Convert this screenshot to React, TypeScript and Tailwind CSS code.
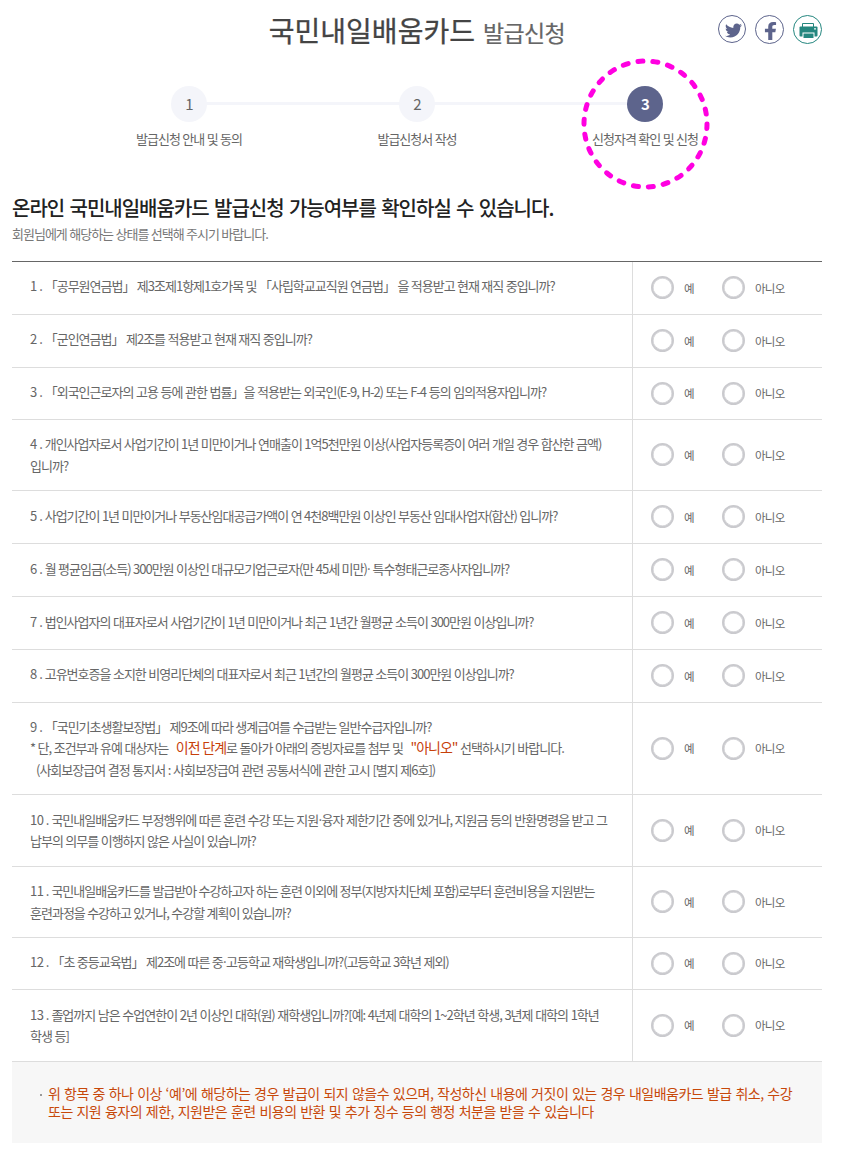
import type { ReactNode } from "react";
import { FaFacebookF, FaTwitter } from "react-icons/fa";

type Question = {
  no: number;
  // row height and word gap
  layout: string;
  lines: ReactNode[];
};

const QUESTIONS: Question[] = [
  {
    no: 1,
    layout: "h-[53px] pb-[5px] [word-spacing:0.5px]",
    lines: [
      "「공무원연금법」 제3조제1항제1호가목 및 「사립학교교직원 연금법」 을 적용받고 현재 재직 중입니까?",
    ],
  },
  {
    no: 2,
    layout: "h-[53px] pb-[5px] [word-spacing:0.6px]",
    lines: ["「군인연금법」 제2조를 적용받고 현재 재직 중입니까?"],
  },
  {
    no: 3,
    layout: "h-[52px] pb-[4px] [word-spacing:0.7px]",
    lines: [
      "「외국인근로자의 고용 등에 관한 법률」을 적용받는 외국인(E-9, H-2) 또는 F-4 등의 임의적용자입니까?",
    ],
  },
  {
    no: 4,
    layout: "h-[71px] pb-[2px] [word-spacing:0.55px]",
    lines: [
      "개인사업자로서 사업기간이 1년 미만이거나 연매출이 1억5천만원 이상(사업자등록증이 여러 개일 경우 합산한 금액)",
      "입니까?",
    ],
  },
  {
    no: 5,
    layout: "h-[53px] pb-[4px] [word-spacing:0.5px]",
    lines: [
      "사업기간이 1년 미만이거나 부동산임대공급가액이 연 4천8백만원 이상인 부동산 임대사업자(합산) 입니까?",
    ],
  },
  {
    no: 6,
    layout: "h-[53px] pb-[4px] [word-spacing:0.5px]",
    lines: [
      <>
        월 평균임금(소득) 300만원 이상인 대규모기업근로자(만 45세 미만)<Dot /> 특수형태근로종사자입니까?
      </>,
    ],
  },
  {
    no: 7,
    layout: "h-[53px] pb-[4px] [word-spacing:0.6px]",
    lines: [
      "법인사업자의 대표자로서 사업기간이 1년 미만이거나 최근 1년간 월평균 소득이 300만원 이상입니까?",
    ],
  },
  {
    no: 8,
    layout: "h-[53px] pb-[5px] [word-spacing:0.6px]",
    lines: [
      "고유번호증을 소지한 비영리단체의 대표자로서 최근 1년간의 월평균 소득이 300만원 이상입니까?",
    ],
  },
  {
    no: 9,
    layout: "h-[92px] pb-[2px] [word-spacing:0.4px]",
    lines: [
      "「국민기초생활보장법」 제9조에 따라 생계급여를 수급받는 일반수급자입니까?",
      <span className="[word-spacing:0.6px]">
        * 단, 조건부과 유예 대상자는{" "}
        <span className="ml-[5px] text-sm/[21px] tracking-[-1px] text-[#c7400a]">이전 단계</span>로
        돌아가 아래의 증빙자료를 첨부 및{" "}
        <span className="ml-[5px] text-sm/[21px] tracking-[-1px] text-[#c7400a]">"아니오"</span>{" "}
        선택하시기 바랍니다.
      </span>,
      <span className="ml-1.5 [word-spacing:0.7px]">
        (사회보장급여 결정 통지서 : 사회보장급여 관련 공통서식에 관한 고시 [별지 제6호])
      </span>,
    ],
  },
  {
    no: 10,
    layout: "h-[72px] pb-[2px] [word-spacing:0.55px]",
    lines: [
      <>
        국민내일배움카드 부정행위에 따른 훈련 수강 또는 지원
        <Dot />
        융자 제한기간 중에 있거나, 지원금 등의 반환명령을 받고 그
      </>,
      "납부의 의무를 이행하지 않은 사실이 있습니까?",
    ],
  },
  {
    no: 11,
    layout: "h-[71px] pb-[2px] [word-spacing:0.45px]",
    lines: [
      "국민내일배움카드를 발급받아 수강하고자 하는 훈련 이외에 정부(지방자치단체 포함)로부터 훈련비용을 지원받는",
      "훈련과정을 수강하고 있거나, 수강할 계획이 있습니까?",
    ],
  },
  {
    no: 12,
    layout: "h-[52px] pb-[4px] [word-spacing:0.5px]",
    lines: [
      <>
        「초 중등교육법」 제2조에 따른 중<Dot />
        고등학교 재학생입니까?(고등학교 3학년 제외)
      </>,
    ],
  },
  {
    no: 13,
    layout: "h-[72px] pb-[2px] [word-spacing:0.7px]",
    lines: [
      "졸업까지 남은 수업연한이 2년 이상인 대학(원) 재학생입니까?[예: 4년제 대학의 1~2학년 학생, 3년제 대학의 1학년",
      "학생 등]",
    ],
  },
];

const STEPS = ["발급신청 안내 및 동의", "발급신청서 작성", "신청자격 확인 및 신청"];

// narrow middle dot
function Dot() {
  return <span className="mr-[-1.5px] -ml-[1.5px]">·</span>;
}

function PrintIcon() {
  return (
    <svg width="19" height="16" viewBox="0 0 19 16" fill="#25877f">
      <path d="M3.5 4V.5h11V4" fill="none" stroke="#25877f" />
      <rect x="0.5" y="3.5" width="18" height="10" rx="1" />
      <circle cx="16" cy="5.8" r="0.9" fill="white" />
      <rect x="4" y="10" width="11" height="5.5" stroke="white" />
    </svg>
  );
}

function Header() {
  return (
    <header className="relative flex h-[60px] justify-center pt-[6px]">
      <h1 className="flex items-baseline gap-[8px] leading-[48px] text-[#444]">
        <span className="text-[28px] font-normal [-webkit-text-stroke:0.3px]">국민내일배움카드</span>
        <span className="text-[23px] tracking-[-0.6px] text-[#666] [-webkit-text-stroke:0.2px]">
          발급신청
        </span>
      </h1>
      <div className="absolute top-[15px] right-0 flex gap-[9px]">
        <button
          type="button"
          className="flex size-[28px] items-center justify-center rounded-full border border-[#5d648c] pt-[3px] pl-[3px] text-[#5d648c]"
        >
          <FaTwitter size={17} />
        </button>
        <button
          type="button"
          className="flex size-[29px] items-center justify-center rounded-full border border-[#5d648c] pt-[3px] pl-[2px] text-[#5d648c]"
        >
          <FaFacebookF size={18} className="w-[13px]" preserveAspectRatio="none" />
        </button>
        <button
          type="button"
          className="flex size-[29px] items-center justify-center rounded-full border border-[#25877f] pt-[2px] pl-[2px]"
        >
          <PrintIcon />
        </button>
      </div>
    </header>
  );
}

function Steps() {
  return (
    <div className="relative mx-[63px] h-[129px] pt-[26px]">
      <div className="absolute top-[42px] right-[114px] left-[114px] h-[3px] bg-[#f4f5fa]" />
      <ol className="relative flex">
        {STEPS.map((label, i) => (
          <li key={label} className="flex w-[228px] flex-col items-center">
            <span
              className={
                i === 2
                  ? "flex size-9 items-center justify-center rounded-full bg-[#5d648c] pl-px text-[15px] font-bold text-white"
                  : "flex size-9 items-center justify-center rounded-full bg-[#f4f5fa] pl-px text-[15px] text-[#666]"
              }
            >
              {i + 1}
            </span>
            <span className="mt-[7px] text-[13px] leading-5 tracking-[-1px] text-[#666] [word-spacing:0.5px]">
              {label}
            </span>
          </li>
        ))}
      </ol>
      <svg
        className="absolute -top-[1px] left-[506px] overflow-visible"
        width="130"
        height="132"
        viewBox="0 0 130 132"
      >
        <ellipse
          cx="64.5"
          cy="65"
          rx="61.5"
          ry="63"
          fill="none"
          stroke="#ff00e1"
          strokeWidth="5"
          strokeLinecap="round"
          strokeDasharray="5 10.04"
          strokeDashoffset="0.5"
        />
      </svg>
    </div>
  );
}

function Option({ name, label }: { name: string; label: string }) {
  return (
    <label className="flex items-center gap-[10px] text-[11.5px] tracking-[-0.7px] text-[#666]">
      <input
        type="radio"
        name={name}
        className="mb-px size-[23px] appearance-none rounded-full border-2 border-[#cacace] bg-white shadow-[inset_0_0_0_0.5px_#cacace] checked:border-[#5d648c]"
      />
      <span className="pt-px">{label}</span>
    </label>
  );
}

function QuestionRow({ no, layout, lines }: Question) {
  return (
    <div className="flex border-b border-[#ddd]">
      <div
        className={`-mb-px flex w-[621px] flex-col justify-center border-r border-[#ddd] pl-[18px] text-[13px] leading-[21.5px] tracking-[-1px] whitespace-nowrap text-[#666] ${layout}`}
      >
        {lines.map((line, i) => (
          <p key={i}>
            {i === 0 && <span className="tracking-[-0.5px] [word-spacing:0px]">{no} . </span>}
            {line}
          </p>
        ))}
      </div>
      <div className="flex items-center gap-[28px] pl-[18px]">
        <Option name={`q${no}`} label="예" />
        <Option name={`q${no}`} label="아니오" />
      </div>
    </div>
  );
}

export default function App() {
  return (
    <div className="h-[1155px] w-[847px] bg-white pr-[25px] pl-3 font-['Noto_Sans_CJK_KR',sans-serif]">
      <Header />
      <Steps />
      <h2 className="text-xl leading-[38px] font-medium tracking-[-1px] text-[#222] [word-spacing:1.8px]">
        온라인 국민내일배움카드 발급신청 가능여부를 확인하실 수 있습니다.
      </h2>
      <p className="h-[34px] text-[13px] leading-[14px] tracking-[-1px] text-[#777] [word-spacing:0.5px]">
        회원님에게 해당하는 상태를 선택해 주시기 바랍니다.
      </p>
      <section className="border-t border-[#666]">
        {QUESTIONS.map((q) => (
          <QuestionRow key={q.no} {...q} />
        ))}
      </section>
      <div className="flex h-[81px] gap-[6px] bg-[#f7f7f7] pt-[22px] pl-[27px] text-sm leading-[18px] tracking-[-0.5px] whitespace-nowrap text-[#c7480a] [word-spacing:1.08px]">
        <span className="mt-[10px] ml-px size-[2px] bg-[#999]" />
        <p>
          위 항목 중 하나 이상 ‘예’에 해당하는 경우 발급이 되지 않을수 있으며, 작성하신 내용에 거짓이 있는 경우 내일배움카드 발급 취소, 수강
          <br />
          또는 지원 융자의 제한, 지원받은 훈련 비용의 반환 및 추가 징수 등의 행정 처분을 받을 수 있습니다
        </p>
      </div>
    </div>
  );
}
